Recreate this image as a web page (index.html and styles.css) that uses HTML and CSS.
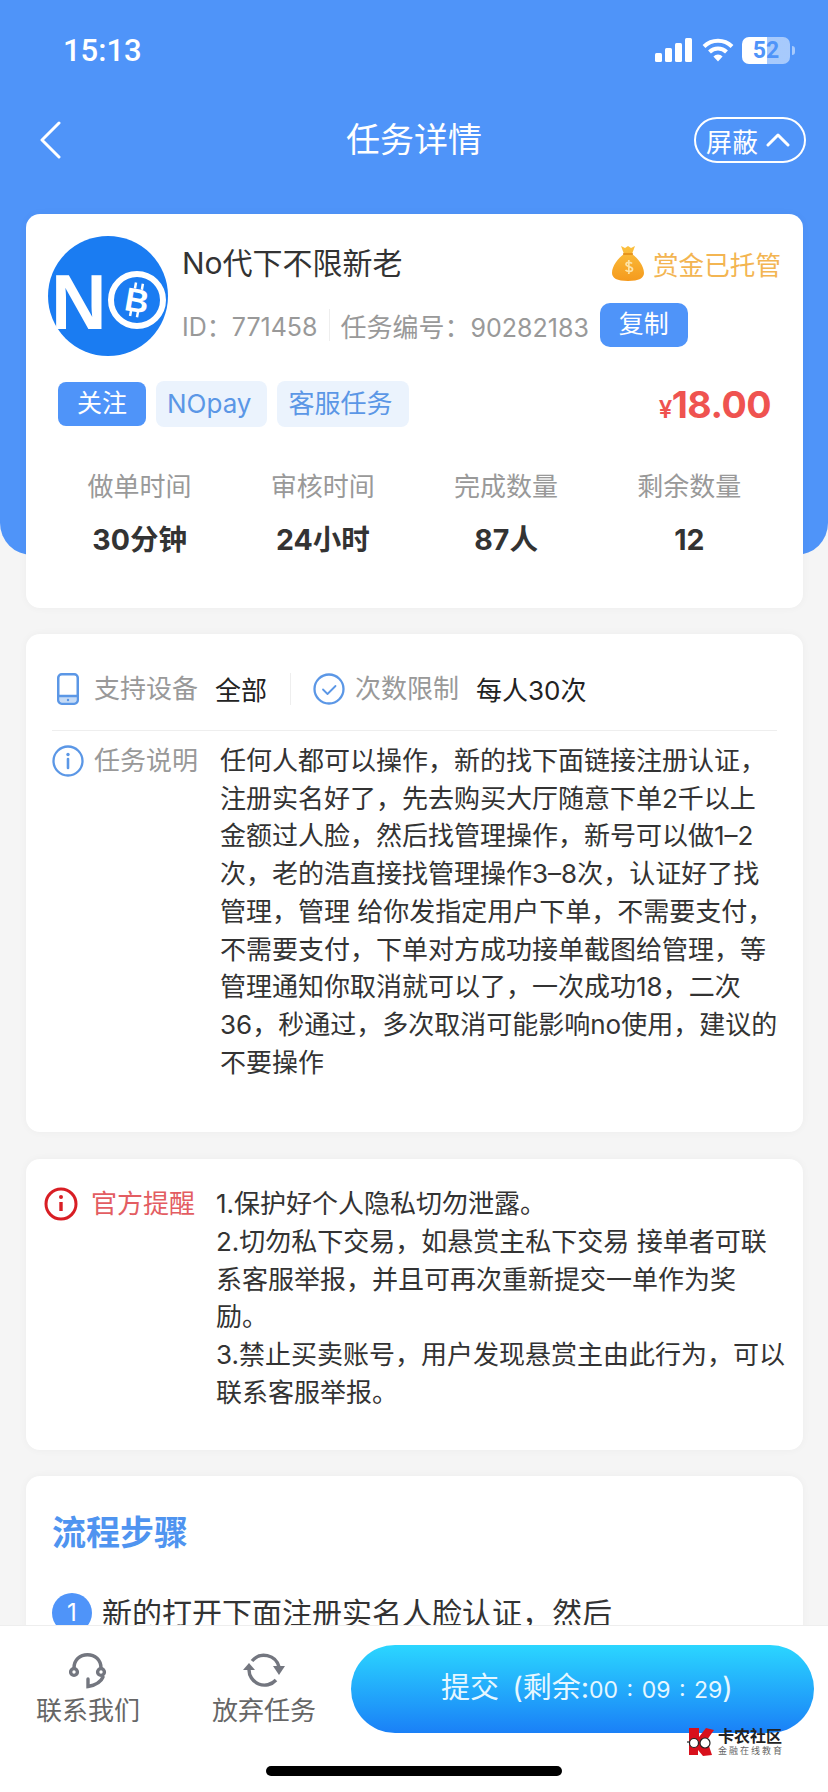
FILE: index.html
```html
<!DOCTYPE html>
<html lang="zh-CN">
<head>
  <meta charset="UTF-8">
  <meta name="viewport" content="width=device-width, initial-scale=1.0">
  <title>任务详情</title>
  <link rel="stylesheet" href="styles.css">
</head>
<body>
  <div class="page">
    <header class="hero">
      <div class="status-bar">
        <span class="time">15:13</span>
        <div class="status-icons">
          <svg class="signal" width="37" height="24" viewBox="0 0 37 24" fill="#fff">
            <rect x="0" y="15" width="7" height="9" rx="1.5"/>
            <rect x="10" y="10" width="7" height="14" rx="1.5"/>
            <rect x="20" y="5" width="7" height="19" rx="1.5"/>
            <rect x="30" y="0" width="7" height="24" rx="1.5"/>
          </svg>
          <svg class="wifi" width="32" height="24" viewBox="0 0 32 24" fill="none" stroke="#fff" stroke-width="4">
            <path d="M2 8.5a20 20 0 0 1 28 0"/>
            <path d="M7.5 14a12 12 0 0 1 17 0"/>
            <path d="M16 23.5l-4.6-5a6.5 6.5 0 0 1 9.2 0z" fill="#fff" stroke="none"/>
          </svg>
          <div class="battery"><span>52</span></div>
          <i class="battery-nub"></i>
        </div>
      </div>
      <nav class="nav">
        <svg class="back" width="22" height="38" viewBox="0 0 22 38" fill="none" stroke="#fff" stroke-width="3" stroke-linecap="round" stroke-linejoin="round">
          <path d="M20 2L3 19l17 17"/>
        </svg>
        <h1>任务详情</h1>
        <div class="block-btn">屏蔽
          <svg width="24" height="14" viewBox="0 0 24 14" fill="none" stroke="#fff" stroke-width="3" stroke-linecap="round" stroke-linejoin="round">
            <path d="M2 12L12 2l10 10"/>
          </svg>
        </div>
      </nav>
    </header>

    <main class="content">
      <section class="card task-card">
        <div class="task-head">
          <svg class="avatar" width="120" height="120" viewBox="0 0 120 120">
            <circle cx="60" cy="60" r="60" fill="#1a7cf2"/>
            <text x="3" y="93" class="avatar-n">N</text>
            <circle cx="89" cy="64" r="26" fill="#1a7cf2" stroke="#fff" stroke-width="6"/>
            <g transform="rotate(10 89 64)">
              <text x="89" y="76" class="avatar-b">B</text>
              <path d="M85 47v6M92 47v6M85 75v6M92 75v6" stroke="#fff" stroke-width="2.500"/>
            </g>
          </svg>
          <div class="task-info">
            <div class="title-row">
              <span class="task-title">No代下不限新老</span>
              <span class="escrow">
                <svg width="32" height="37" viewBox="0 0 32 37">
                  <defs>
                    <linearGradient id="bag" x1="0" y1="0" x2="0" y2="1">
                      <stop offset="0" stop-color="#fbc13f"/>
                      <stop offset="1" stop-color="#f59a1d"/>
                    </linearGradient>
                  </defs>
                  <path d="M9 1l4 2 3-2 3 2 4-2-3 8c6 4 12 12 12 19 0 5-5 8-16 8S0 33 0 28c0-7 6-15 12-19z" fill="url(#bag)"/>
                  <path d="M11 9h10" stroke="#e08a14" stroke-width="1.5"/>
                  <path d="M20 18.500c-1-1.500-6-2-6 .8 0 3 6.500 1.700 6.500 5 0 2.800-5.500 2.500-7 .7M16.800 15v14" fill="none" stroke="#fde3a6" stroke-width="1.700"/>
                </svg>
                赏金已托管
              </span>
            </div>
            <div class="meta-row">
              <span class="meta-id">ID：771458</span>
              <i class="meta-line"></i>
              <span class="meta-no"><span class="meta-label">任务编号：</span>90282183</span>
              <span class="copy-btn">复制</span>
            </div>
          </div>
        </div>
        <div class="tag-row">
          <span class="follow-btn">关注</span>
          <span class="tag">NOpay</span>
          <span class="tag">客服任务</span>
          <span class="price"><small>¥</small>18.00</span>
        </div>
        <div class="stats">
          <div class="stat"><span>做单时间</span><b>30分钟</b></div>
          <div class="stat"><span>审核时间</span><b>24小时</b></div>
          <div class="stat"><span>完成数量</span><b>87人</b></div>
          <div class="stat"><span>剩余数量</span><b>12</b></div>
        </div>
      </section>

      <section class="card desc-card">
        <div class="support-row">
          <svg class="phone-icon" width="22" height="32" viewBox="0 0 22 32" fill="none" stroke="#5b97e6" stroke-width="2.500">
            <rect x="1.250" y="1.250" width="19.500" height="29.500" rx="3.500"/>
            <path d="M1.500 23h19" />
            <path d="M3 24h16v5H3z" fill="#5b97e6" fill-opacity=".35" stroke="none"/>
            <circle cx="11" cy="27" r="1.200" fill="#5b97e6" stroke="none"/>
          </svg>
          <span class="grey-label">支持设备</span>
          <span class="value">全部</span>
          <i class="support-line"></i>
          <svg class="check-icon" width="32" height="32" viewBox="0 0 32 32" fill="none" stroke="#5b97e6">
            <circle cx="16" cy="16" r="14.500" stroke-width="2.300"/>
            <path d="M10 16.500l4.500 4.500 8-8" stroke-width="1.800" stroke-linecap="round" stroke-linejoin="round"/>
          </svg>
          <span class="grey-label">次数限制</span>
          <span class="value">每人30次</span>
        </div>
        <div class="desc-row">
          <svg class="info-icon" width="32" height="32" viewBox="0 0 32 32" fill="none" stroke="#5b97e6">
            <circle cx="16" cy="16" r="14.500" stroke-width="2.300"/>
            <path d="M16 14v9" stroke-width="2.600" stroke-linecap="round"/>
            <circle cx="16" cy="9.500" r="1.700" fill="#5b97e6" stroke="none"/>
          </svg>
          <span class="grey-label">任务说明</span>
          <p class="desc-text">任何人都可以操作，新的找下面链接注册认证，<br>注册实名好了，先去购买大厅随意下单2千以上<br>金额过人脸，然后找管理操作，新号可以做1–2<br>次，老的浩直接找管理操作3–8次，认证好了找<br>管理，管理 给你发指定用户下单，不需要支付，<br>不需要支付，下单对方成功接单截图给管理，等<br>管理通知你取消就可以了，一次成功18，二次<br>36，秒通过，多次取消可能影响no使用，建议的<br>不要操作</p>
        </div>
      </section>

      <section class="card notice-card">
        <svg class="notice-icon" width="34" height="34" viewBox="0 0 34 34" fill="none" stroke="#d81e24">
          <circle cx="17" cy="17" r="15" stroke-width="3"/>
          <path d="M17 15v9" stroke-width="3.400"/>
          <circle cx="17" cy="10" r="2" fill="#d81e24" stroke="none"/>
        </svg>
        <span class="notice-label">官方提醒</span>
        <p class="notice-text">1.保护好个人隐私切勿泄露。<br>2.切勿私下交易，如悬赏主私下交易 接单者可联<br>系客服举报，并且可再次重新提交一单作为奖<br>励。<br>3.禁止买卖账号，用户发现悬赏主由此行为，可以<br>联系客服举报。</p>
      </section>

      <section class="card steps-card">
        <h2>流程步骤</h2>
        <div class="step"><span class="step-no">1</span>新的打开下面注册实名人脸认证，然后</div>
      </section>
    </main>

    <footer class="bottom-bar">
      <div class="bar-item">
        <svg width="38" height="36" viewBox="0 0 38 36" fill="none" stroke="#73767f" stroke-width="3.400" stroke-linecap="round">
          <path d="M5 15C5 7 11 1.700 18.500 1.700S32 7 32 15"/>
          <circle cx="5" cy="19" r="3.400"/>
          <circle cx="32" cy="19" r="3.400"/>
          <path d="M34 24c-2 5-7 8-15 9.500V26"/>
        </svg>
        <span>联系我们</span>
      </div>
      <div class="bar-item">
        <svg width="42" height="36" viewBox="0 0 42 36" fill="none" stroke="#73767f" stroke-width="3.400">
          <path d="M9 8A15.500 15.500 0 0 1 36 14"/>
          <path d="M6 16A15.500 15.500 0 0 0 33 27"/>
          <path d="M0 17h12l-6-7z" fill="#73767f" stroke="none"/>
          <path d="M30 13h12l-6 9z" fill="#73767f" stroke="none"/>
        </svg>
        <span>放弃任务</span>
      </div>
      <div class="submit-btn">提交 (剩余:<span class="timer">00 : 09 : 29</span>)</div>
    </footer>

    <div class="watermark">
      <svg width="28" height="30" viewBox="0 0 28 30">
        <path d="M2 1h10v9l7-9 8 2-7 10 5 15-9 1-5-6v5H2z" fill="#d8101c"/>
        <path d="M0 15h3" stroke="#222" stroke-width="1.200"/>
        <circle cx="7" cy="16" r="4.500" fill="#fff" stroke="#222" stroke-width="1.200"/>
        <circle cx="18" cy="16" r="5" fill="#fff" stroke="#222" stroke-width="1.200"/>
      </svg>
      <div class="watermark-text"><b>卡农社区</b><span>金融在线教育</span></div>
    </div>
    <div class="home-indicator"></div>
  </div>
</body>
</html>
```

FILE: styles.css
```css
* {
  box-sizing: border-box;
}

body {
  margin: 0;
  font-family: Inter, "Noto Sans CJK SC", sans-serif;
  background-color: #f5f5f5;
  color: #333;
}

.page {
  position: relative;
  width: 828px;
  height: 1792px;
  overflow: hidden;
}

/* blue top part */
.hero {
  height: 555px;
  background-color: #4f94f9;
  border-radius: 0 0 32px 32px;
  color: #fff;
}

.status-bar {
  display: flex;
  justify-content: space-between;
  align-items: center;
  height: 100px;
  padding: 0 33px 0 63px;
}

.time {
  font-family: Roboto, sans-serif;
  font-size: 31px;
  font-weight: 500;
}

.status-icons {
  display: flex;
  align-items: center;
}

.signal {
  margin-right: 10px;
}

.wifi {
  margin-right: 8px;
}

.battery {
  width: 48px;
  height: 27px;
  border-radius: 7px;
  background: linear-gradient(90deg, #fff 52%, rgba(255, 255, 255, 0.5) 52%);
  color: #4f94f9;
  font-family: Roboto, sans-serif;
  font-size: 23px;
  font-weight: 700;
  line-height: 27px;
  text-align: center;
}

.battery-nub {
  width: 3px;
  height: 9px;
  margin-left: 2px;
  border-radius: 0 3px 3px 0;
  background-color: rgba(255, 255, 255, 0.5);
}

.nav {
  display: grid;
  grid-template-columns: 1fr auto 1fr;
  align-items: center;
  height: 46px;
  margin-top: 17px;
  padding: 0 22px;
}

.back {
  margin-left: 17px;
}

.nav h1 {
  margin: 0;
  font-size: 34px;
  font-weight: 400;
  line-height: 46px;
}

.block-btn {
  display: flex;
  align-items: center;
  justify-content: center;
  gap: 8px;
  justify-self: end;
  width: 112px;
  height: 46px;
  padding-right: 4px;
  border: 2px solid #fff;
  border-radius: 23px;
  font-size: 26px;
}

.content {
  margin-top: -341px;
  padding: 0 25px 0 26px;
}

.card {
  margin-bottom: 27px;
  background-color: #fff;
  border-radius: 14px;
  box-shadow: 0 0 8px rgba(0, 0, 0, 0.04);
}

/* first card */
.task-card {
  height: 394px;
  margin-bottom: 26px;
  padding: 22px 22px 0;
}

.task-head {
  display: flex;
  gap: 14px;
}

.avatar {
  flex-shrink: 0;
}

.avatar-n {
  font-family: "Liberation Sans", sans-serif;
  font-size: 77px;
  font-weight: 700;
  fill: #fff;
}

.avatar-b {
  font-family: "Liberation Sans", sans-serif;
  font-size: 33px;
  font-weight: 700;
  fill: #fff;
  text-anchor: middle;
}

.task-info {
  flex: 1;
  padding-top: 7px;
}

.title-row {
  display: flex;
  justify-content: space-between;
  align-items: center;
  height: 40px;
}

.task-title {
  font-size: 30px;
  line-height: 40px;
}

.escrow {
  display: flex;
  align-items: center;
  gap: 9px;
  color: #f3b552;
  font-size: 25.6px;
}

.meta-row {
  display: flex;
  align-items: center;
  height: 44px;
  margin-top: 20px;
  color: #999;
  font-size: 25px;
}

.meta-line {
  width: 1px;
  height: 32px;
  margin: 0 11px 0 11px;
  background-color: #eee;
}

.meta-label {
  font-size: 26px;
}

.copy-btn {
  width: 88px;
  height: 44px;
  margin-left: 11px;
  border-radius: 10px;
  background-color: #4f94f9;
  color: #fff;
  line-height: 43px;
  text-align: center;
}

.tag-row {
  display: flex;
  align-items: center;
  gap: 10px;
  height: 46px;
  margin-top: 25px;
  padding: 0 10px;
}

.follow-btn {
  width: 88px;
  height: 44px;
  border-radius: 8px;
  background-color: #4f94f9;
  color: #fff;
  font-size: 25px;
  line-height: 43px;
  text-align: center;
}

.tag {
  height: 46px;
  padding: 0 16px 0 11px;
  border-radius: 8px;
  background-color: #ebf3fd;
  color: #5b97e6;
  font-size: 26px;
  line-height: 45px;
}

.price {
  margin-left: auto;
  color: #ef5350;
  font-size: 37.5px;
  font-weight: 700;
  font-family: Inter, sans-serif;
  letter-spacing: -0.5px;
}

.price small {
  font-size: 24px;
  font-weight: 600;
}

.stats {
  display: grid;
  grid-template-columns: repeat(4, 1fr);
  margin-top: 45px;
  text-align: center;
}

.stat span {
  display: block;
  color: #999;
  font-size: 26px;
  line-height: 30px;
}

.stat b {
  display: block;
  margin-top: 23px;
  color: #333;
  font-size: 28.5px;
  line-height: 30px;
}

/* second card */
.desc-card {
  padding: 39px 26px 51px;
}

.grey-label {
  flex-shrink: 0;
  color: #999;
  font-size: 26px;
  line-height: 32px;
}

.support-row {
  display: flex;
  align-items: center;
  height: 58px;
  padding: 0 0 26px 5px;
  border-bottom: 1px solid #eee;
}

.phone-icon {
  margin-right: 15px;
}

.value {
  margin-left: 17px;
  color: #222;
  font-size: 26px;
}

.support-line {
  width: 1px;
  height: 32px;
  margin: 0 22px 0 23px;
  background-color: #eee;
}

.check-icon {
  margin-right: 10px;
}

.desc-row {
  display: flex;
  margin-top: 11px;
}

.info-icon {
  flex-shrink: 0;
  margin: 3px 10px 0 0;
}

.desc-row .grey-label {
  line-height: 37.7px;
}

.desc-text,
.notice-text {
  margin: 0;
  color: #333;
  font-size: 26px;
  line-height: 37.7px;
  white-space: nowrap;
}

.desc-text {
  margin-left: 22px;
}

/* third card */
.notice-card {
  display: flex;
  align-items: flex-start;
  height: 291px;
  margin-bottom: 26px;
  padding: 26px 18px 0;
}

.notice-icon {
  flex-shrink: 0;
  margin: 2px 13px 0 0;
}

.notice-label {
  flex-shrink: 0;
  color: #e35d62;
  font-size: 26px;
  line-height: 37.7px;
}

.notice-text {
  margin-left: 21px;
}

/* steps, cut off by the bottom bar */
.steps-card {
  padding: 34px 26px 40px;
}

.steps-card h2 {
  margin: 0;
  color: #4f94f0;
  font-size: 34px;
  font-weight: 700;
  line-height: 46px;
}

.step {
  display: flex;
  align-items: center;
  gap: 10px;
  margin-top: 36px;
  font-size: 30px;
  line-height: 42px;
}

.step-no {
  flex-shrink: 0;
  width: 40px;
  height: 40px;
  border-radius: 50%;
  background-color: #4f94f9;
  color: #fff;
  font-size: 24px;
  line-height: 40px;
  text-align: center;
}

/* fixed bar over the content */
.bottom-bar {
  position: absolute;
  left: 0;
  right: 0;
  bottom: 0;
  display: flex;
  align-items: flex-start;
  height: 167px;
  padding: 0 14px 0 37px;
  background-color: #fff;
  border-top: 1px solid #eee;
}

.bar-item {
  display: flex;
  flex-direction: column;
  align-items: center;
  width: 102px;
  height: 100%;
  margin-right: 74px;
  padding-top: 27px;
  color: #666;
  font-size: 26px;
}

.bar-item:nth-child(2) {
  margin-right: 36px;
}

.bar-item svg {
  flex-shrink: 0;
}

.bar-item span {
  margin-top: 4px;
  line-height: 36px;
  white-space: nowrap;
}

.submit-btn {
  flex: 1;
  height: 88px;
  margin-top: 19px;
  padding-left: 90px;
  border-radius: 44px;
  background: linear-gradient(180deg, #2bd6ff, #1a80f7);
  color: #e6f7ff;
  font-size: 29px;
  line-height: 86px;
  word-spacing: 5px;
  white-space: nowrap;
}

.timer {
  font-family: Inter, sans-serif;
  font-size: 23px;
  word-spacing: 2px;
}

.watermark {
  position: absolute;
  left: 687px;
  top: 1727px;
  display: flex;
  align-items: center;
  gap: 3px;
}

.watermark-text {
  display: flex;
  flex-direction: column;
  color: #222;
}

.watermark-text b {
  font-size: 16px;
  line-height: 17px;
}

.watermark-text span {
  color: #666;
  font-size: 9px;
  line-height: 12px;
  letter-spacing: 2px;
}

.home-indicator {
  position: absolute;
  left: 266px;
  bottom: 16px;
  width: 296px;
  height: 10px;
  border-radius: 5px;
  background-color: #000;
}
```
